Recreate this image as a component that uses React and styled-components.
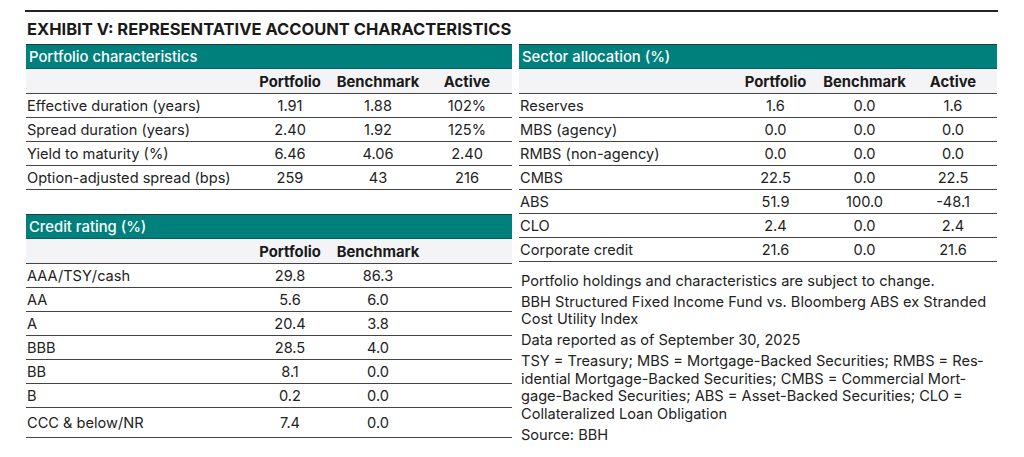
import styled, { createGlobalStyle } from "styled-components"

const GlobalStyle = createGlobalStyle`
  body {
    margin: 0;
    background: #fff;
    font-family: Inter, "Liberation Sans", sans-serif;
    color: #222;
  }
`

const portfolio = {
  title: "Portfolio characteristics",
  heads: ["Portfolio", "Benchmark", "Active"],
  rows: [
    ["Effective duration (years)", "1.91", "1.88", "102%"],
    ["Spread duration (years)", "2.40", "1.92", "125%"],
    ["Yield to maturity (%)", "6.46", "4.06", "2.40"],
    ["Option-adjusted spread (bps)", "259", "43", "216"],
  ],
}

const credit = {
  title: "Credit rating (%)",
  heads: ["Portfolio", "Benchmark", ""],
  rows: [
    ["AAA/TSY/cash", "29.8", "86.3", ""],
    ["AA", "5.6", "6.0", ""],
    ["A", "20.4", "3.8", ""],
    ["BBB", "28.5", "4.0", ""],
    ["BB", "8.1", "0.0", ""],
    ["B", "0.2", "0.0", ""],
    ["CCC & below/NR", "7.4", "0.0", ""],
  ],
}

const sector = {
  title: "Sector allocation (%)",
  heads: ["Portfolio", "Benchmark", "Active"],
  rows: [
    ["Reserves", "1.6", "0.0", "1.6"],
    ["MBS (agency)", "0.0", "0.0", "0.0"],
    ["RMBS (non-agency)", "0.0", "0.0", "0.0"],
    ["CMBS", "22.5", "0.0", "22.5"],
    ["ABS", "51.9", "100.0", "-48.1"],
    ["CLO", "2.4", "0.0", "2.4"],
    ["Corporate credit", "21.6", "0.0", "21.6"],
  ],
}

const notes = [
  "Portfolio holdings and characteristics are subject to change.",
  "BBH Structured Fixed Income Fund vs. Bloomberg ABS ex Stranded Cost Utility Index",
  "Data reported as of September 30, 2025",
  "TSY = Treasury; MBS = Mortgage-Backed Securities; RMBS = Res\u00adidential Mortgage-Backed Securities; CMBS = Commercial Mort\u00adgage-Backed Securities; ABS = Asset-Backed Securities; CLO = Collateralized Loan Obligation",
  "Source: BBH",
]

function DataTable({ data, cols, tallLast }) {
  return (
    <Table>
      <TableTitle>{data.title}</TableTitle>
      <HeadRow cols={cols}>
        <span />
        {data.heads.map((h, i) => (
          <HeadCell key={i}>{h}</HeadCell>
        ))}
      </HeadRow>
      {data.rows.map((r, i) => (
        <Row key={i} cols={cols} tall={tallLast && i === data.rows.length - 1}>
          <Label>{r[0]}</Label>
          {r.slice(1).map((v, j) => (
            <Value key={j}>{v}</Value>
          ))}
        </Row>
      ))}
    </Table>
  )
}

export default function App() {
  return (
    <>
      <GlobalStyle />
      <Page>
        <Title>EXHIBIT V: REPRESENTATIVE ACCOUNT CHARACTERISTICS</Title>
        <Columns>
          <Stack>
            <DataTable data={portfolio} cols="1fr 88px 88px 90px" />
            <DataTable data={credit} cols="1fr 88px 88px 90px" tallLast />
          </Stack>
          <Stack>
            <DataTable data={sector} cols="1fr 89px 89px 88px" />
            <Notes>
              {notes.map((n, i) => (
                <Note key={i}>{n}</Note>
              ))}
            </Notes>
          </Stack>
        </Columns>
      </Page>
    </>
  )
}

const Page = styled.div`
  width: 973px;
  margin: 10px 0 0 25px;
  border-top: 2px solid #222;
`

const Title = styled.h1`
  margin: 0;
  height: 32px;
  padding: 1px 0 0 2px;
  box-sizing: border-box;
  display: flex;
  align-items: center;
  font-size: 16.5px;
  font-weight: 700;
  color: #1a1a1a;
`

const Columns = styled.div`
  display: grid;
  grid-template-columns: 486px 478px;
  column-gap: 7px;
  padding-left: 1px;
`

const Stack = styled.div`
  display: flex;
  flex-direction: column;
  gap: 24px;
`

const Table = styled.div`
  display: flex;
  flex-direction: column;
`

const TableTitle = styled.div`
  height: 25px;
  background: #00807c;
  border-top: 1px solid #1f3b3a;
  border-bottom: 1px solid #0d5e5b;
  box-sizing: border-box;
  display: flex;
  align-items: center;
  padding-left: 3px;
  color: #fff;
  font-size: 14.8px;
  font-weight: 500;
`

const HeadRow = styled.div`
  display: grid;
  grid-template-columns: ${(p) => p.cols};
  height: 25px;
  box-sizing: border-box;
  align-items: center;
  padding-top: 1px;
  background: #f4f4f6;
  border-bottom: 1px solid #444;
`

const HeadCell = styled.span`
  text-align: center;
  font-size: 14.8px;
  font-weight: 700;
  color: #1a1a1a;
`

const Row = styled.div`
  display: grid;
  grid-template-columns: ${(p) => p.cols};
  height: ${(p) => (p.tall ? 30 : 24)}px;
  box-sizing: border-box;
  align-items: center;
  padding-top: 1px;
  border-bottom: 1px solid #444;
  font-size: 14.6px;
  color: #222;
`

const Label = styled.span`
  padding-left: 1px;
  white-space: nowrap;
`

const Value = styled.span`
  text-align: center;
`

const Notes = styled.div`
  display: flex;
  flex-direction: column;
  gap: 3px;
  margin-top: -13px;
  padding-left: 2px;
  padding-right: 6px;
`

const Note = styled.p`
  margin: 0;
  font-size: 14.6px;
  line-height: 17.7px;
  color: #222;
  hyphens: manual;
`
